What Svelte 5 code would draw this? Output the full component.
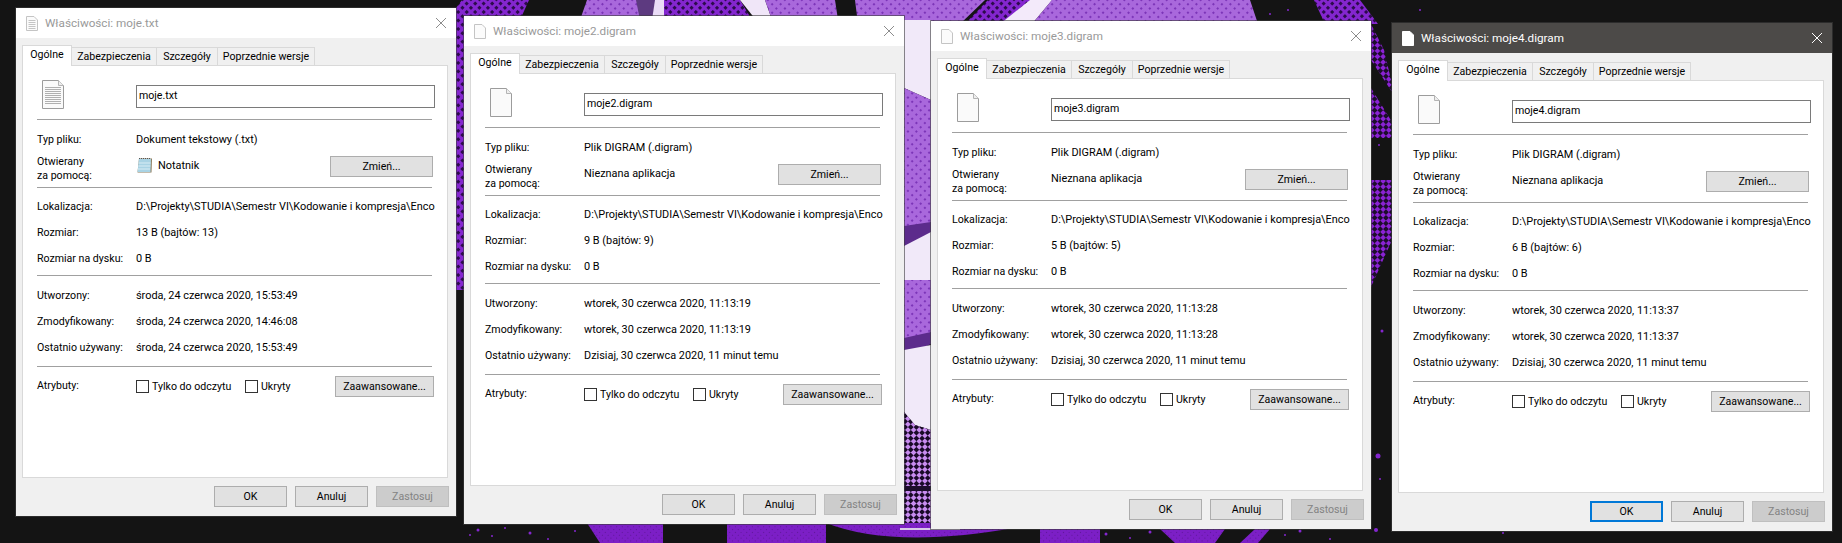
<script lang="ts">
    const path = "D:\\Projekty\\STUDIA\\Semestr VI\\Kodowanie i kompresja\\Enco";

    const windows = [
        {
            id: "w1", name: "moje.txt", kind: "Dokument tekstowy (.txt)", app: "Notatnik", text: true,
            size: "13 B (bajtów: 13)", created: "środa, 24 czerwca 2020, 15:53:49",
            modified: "środa, 24 czerwca 2020, 14:46:08", used: "środa, 24 czerwca 2020, 15:53:49"
        },
        {
            id: "w2", name: "moje2.digram", kind: "Plik DIGRAM (.digram)", app: "Nieznana aplikacja", text: false,
            size: "9 B (bajtów: 9)", created: "wtorek, 30 czerwca 2020, 11:13:19",
            modified: "wtorek, 30 czerwca 2020, 11:13:19", used: "Dzisiaj, 30 czerwca 2020, 11 minut temu"
        },
        {
            id: "w3", name: "moje3.digram", kind: "Plik DIGRAM (.digram)", app: "Nieznana aplikacja", text: false,
            size: "5 B (bajtów: 5)", created: "wtorek, 30 czerwca 2020, 11:13:28",
            modified: "wtorek, 30 czerwca 2020, 11:13:28", used: "Dzisiaj, 30 czerwca 2020, 11 minut temu"
        },
        {
            id: "w4", name: "moje4.digram", kind: "Plik DIGRAM (.digram)", app: "Nieznana aplikacja", text: false, active: true,
            size: "6 B (bajtów: 6)", created: "wtorek, 30 czerwca 2020, 11:13:37",
            modified: "wtorek, 30 czerwca 2020, 11:13:37", used: "Dzisiaj, 30 czerwca 2020, 11 minut temu"
        }
    ];

    const tabs = ["Zabezpieczenia", "Szczegóły", "Poprzednie wersje"];

    // loose purple specks on the dark part of the wallpaper
    const specks = [
        [478, 530, 1.5], [492, 536, 1], [505, 528, 1], [530, 533, 1.5], [548, 539, 1], [575, 531, 1],
        [1106, 534, 1.5], [1130, 538, 1], [1150, 532, 1.5], [1285, 535, 1], [1300, 531, 1.5], [1330, 539, 1],
        [1379, 145, 1], [1379, 238, 1.5], [1382, 331, 1.5], [1378, 456, 2.5], [1380, 479, 1], [1376, 530, 2],
        [1503, 533, 1], [1340, 8, 1], [1420, 10, 1], [470, 535, 1], [1288, 10, 1], [1270, 14, 1]
    ];
</script>

<main class="desktop">
    <svg class="wallpaper" viewBox="0 0 1842 543" width="1842" height="543" aria-hidden="true">
        <defs>
            <pattern id="deep" width="6" height="6" patternUnits="userSpaceOnUse" patternTransform="rotate(45)">
                <rect width="6" height="6" fill="#8426cf" />
                <rect x="1" y="1" width="3" height="3" fill="#2c0b4c" />
            </pattern>
            <pattern id="soft" width="6" height="6" patternUnits="userSpaceOnUse" patternTransform="rotate(45)">
                <rect width="6" height="6" fill="#a968dc" />
                <rect x="2" y="2" width="2" height="2" fill="#7c35b8" />
            </pattern>
            <pattern id="check" width="8" height="8" patternUnits="userSpaceOnUse" patternTransform="rotate(45)">
                <rect width="8" height="8" fill="#c88cf0" />
                <rect width="4" height="4" fill="#1a0a28" />
                <rect x="4" y="4" width="4" height="4" fill="#1a0a28" />
            </pattern>
            <pattern id="night" width="8" height="8" patternUnits="userSpaceOnUse" patternTransform="rotate(45)">
                <rect width="8" height="8" fill="#8a22d4" />
                <rect width="4" height="4" fill="#1d0d2c" />
                <rect x="4" y="4" width="4" height="4" fill="#1d0d2c" />
            </pattern>
            <pattern id="fine" width="4" height="4" patternUnits="userSpaceOnUse" patternTransform="rotate(45)">
                <rect width="4" height="4" fill="#7c1fc6" />
                <rect width="1" height="1" fill="#5f1799" />
            </pattern>
        </defs>
        <rect width="1842" height="543" fill="#141414" />

        <polygon points="462,0 529,0 520,20 470,290 456,290 456,8" fill="url(#deep)" />
        <polygon points="587,0 663,0 660,20 580,20" fill="url(#soft)" />
        <polygon points="636,0 663,0 660,20 640,20" fill="#5d3a80" />
        <polygon points="655,0 664,0 664,20 652,20" fill="#eadcf6" />
        <polygon points="664,0 740,0 752,20 664,20" fill="url(#deep)" />
        <polygon points="740,0 765,0 772,20 756,20" fill="#f0e6f8" />
        <polygon points="765,0 835,0 838,20 772,20" fill="url(#soft)" />
        <polygon points="855,0 985,0 960,24 858,24" fill="url(#soft)" />
        <polygon points="988,0 1052,0 1030,24 965,24" fill="url(#deep)" />
        <polygon points="1030,0 1052,0 1032,24 1000,24" fill="#f3eafa" />
        <polygon points="1052,0 1250,0 1258,24 1032,24" fill="url(#soft)" />
        <polygon points="1314,0 1360,0 1378,24 1325,24" fill="url(#deep)" />

        <polygon points="904,20 931,20 931,100 904,88" fill="#f1e9f9" />
        <polygon points="904,88 931,100 931,226 904,240" fill="url(#soft)" />
        <polygon points="904,240 931,226 931,280 904,280" fill="#f1e9f9" />
        <polygon points="904,226 931,222 931,232 904,246" fill="#5c2b8c" />
        <polygon points="904,280 931,280 931,334 904,346" fill="url(#soft)" />
        <polygon points="904,338 931,332 931,344 904,356" fill="#5c2b8c" />
        <polygon points="904,350 931,345 931,430 915,425 904,412" fill="#f1e9f9" />
        <polygon points="904,412 915,425 931,430 931,490 904,490" fill="url(#check)" />
        <rect x="904" y="490" width="27" height="33" fill="url(#check)" />
        <rect x="904" y="486" width="27" height="5" fill="#1d0d2c" />

        <polygon points="1371,24 1384,50 1392,84 1392,92 1371,60" fill="url(#night)" />
        <polygon points="1371,88 1392,122 1392,138 1371,138" fill="url(#night)" />
        <polygon points="1371,180 1392,180 1392,240 1371,287" fill="url(#night)" />

        <polygon points="587,523 663,523 663,543 600,543" fill="url(#fine)" />
        <polygon points="727,523 1100,523 1100,543 727,543" fill="url(#fine)" />
        <path d="M826 523 Q900 552 1040 523 L1040 543 L826 543 Z" fill="#141414" />
        <rect x="900" y="528" width="60" height="2" fill="#d8c8e8" />
        <polygon points="1160,529 1225,529 1215,543 1175,543" fill="url(#fine)" />
        <polygon points="1255,529 1270,529 1258,543 1240,543" fill="url(#fine)" />
        {#each specks as [cx, cy, r]}
            <circle {cx} {cy} {r} fill="#8426cf" />
        {/each}
    </svg>

    {#each windows as win}
        <section class="window {win.id}" class:active={win.active}>
            <header class="titlebar">
                <svg class="title-icon" viewBox="0 0 12 15" width="12" height="15" aria-hidden="true">
                    <path d="M.5.5h7.5l3.5 3.5v10.500h-11z" fill={win.active ? "#fff" : "#fbfbfb"} stroke={win.active ? "#fff" : "#c4c4c4"} />
                    {#if win.text}
                        <path d="M2.500 4.500h7M2.500 6.500h7M2.500 8.500h7M2.500 10.500h7M2.500 12.500h7" stroke="#c4c4c4" />
                    {/if}
                </svg>
                <span class="title-text">Właściwości: {win.name}</span>
                <svg class="close" viewBox="0 0 10 10" width="10" height="10" aria-hidden="true">
                    <path d="M0 0l10 10M10 0L0 10" stroke="currentColor" stroke-width="1" />
                </svg>
            </header>

            <nav class="tabs">
                <span class="tab current">Ogólne</span>
                {#each tabs as tab}
                    <span class="tab">{tab}</span>
                {/each}
            </nav>

            <div class="panel">
                <div class="name-row">
                    <svg class="file-icon" viewBox="0 0 22 29" width="22" height="29" aria-hidden="true">
                        <path d="M.5.5h16l5 5v23h-21z" fill="#fafafa" stroke="#9c9c9c" />
                        <path d="M16.500.5v5h5" fill="#eee" stroke="#b4b4b4" />
                        {#if win.text}
                            <path d="M3 7.500h16M3 9.500h16M3 11.500h16M3 13.500h16M3 15.500h16M3 17.500h16M3 19.500h16M3 21.500h16M3 23.500h16" stroke="#b0b0b0" />
                        {/if}
                    </svg>
                    <input class="name-input" type="text" readonly value={win.name} />
                </div>
                <hr />

                <div class="row first"><span>Typ pliku:</span><span>{win.kind}</span></div>
                <div class="open-row">
                    <span class="open-label">Otwierany<br />za pomocą:</span>
                    <span class="open-app">
                        {#if win.text}
                            <svg class="app-icon" viewBox="0 0 17 17" width="17" height="17" aria-hidden="true">
                                <path d="M3 1.500h13l-.5 14h-14z" fill="#8a7a5c" />
                                <path d="M3 2h12l-.5 13h-13z" fill="#a9d3e4" />
                                <path d="M3 1.500h12" stroke="#555" stroke-dasharray="1 1" />
                                <path d="M2.500 6h12M2.300 9h12M2 12h12" stroke="#d8edf5" />
                            </svg>
                        {/if}
                        {win.app}
                    </span>
                    <button class="btn change" type="button">Zmień...</button>
                </div>
                <hr />

                <div class="row first-tight"><span>Lokalizacja:</span><span class="path">{path}</span></div>
                <div class="row"><span>Rozmiar:</span><span>{win.size}</span></div>
                <div class="row"><span>Rozmiar na dysku:</span><span>0 B</span></div>
                <hr class="close-gap" />

                <div class="row first"><span>Utworzony:</span><span>{win.created}</span></div>
                <div class="row"><span>Zmodyfikowany:</span><span>{win.modified}</span></div>
                <div class="row"><span>Ostatnio używany:</span><span>{win.used}</span></div>
                <hr class="open-gap" />

                <div class="attr-row">
                    <span class="attr-label">Atrybuty:</span>
                    <label class="check read-only"><input type="checkbox" />Tylko do odczytu</label>
                    <label class="check"><input type="checkbox" />Ukryty</label>
                    <button class="btn advanced" type="button">Zaawansowane...</button>
                </div>
            </div>

            <footer class="actions">
                <button class="btn action" class:default={win.active} type="button">OK</button>
                <button class="btn action" type="button">Anuluj</button>
                <button class="btn action" type="button" disabled>Zastosuj</button>
            </footer>
        </section>
    {/each}
</main>

<style>
    :global(body) {
        background: #141414;
    }

    .desktop {
        position: relative;
        width: 1842px;
        height: 543px;
        overflow: hidden;
        font-family: Roboto, "Liberation Sans", sans-serif;
        font-size: 10.6px;
        color: #000;
    }

    .wallpaper {
        position: absolute;
        left: 0;
        top: 0;
    }

    /* Windows sit on a free desktop, so these four are placed by hand */
    .window {
        position: absolute;
        width: 440px;
        height: 508px;
        display: flex;
        flex-direction: column;
        background: #f0f0f0;
        box-shadow: 0 0 0 1px rgba(60, 60, 60, 0.6);
    }

    .w1 { left: 16px; top: 8px; }
    .w2 { left: 464px; top: 16px; }
    .w3 { left: 931px; top: 21px; }
    .w4 { left: 1392px; top: 23px; }

    .titlebar {
        height: 30px;
        flex-shrink: 0;
        display: flex;
        align-items: center;
        padding: 0 10px 0 10px;
        background: #fff;
        color: #999;
        font-size: 11.7px;
    }

    .title-icon {
        margin-right: 7px;
    }

    .title-text {
        flex: 1;
    }

    .close {
        margin-top: -1px;
        color: #8c8c8c;
    }

    .active .titlebar {
        background: #4c4a48;
        color: #fff;
    }

    .active .close {
        color: #fff;
    }

    .tabs {
        height: 27px;
        flex-shrink: 0;
        display: flex;
        align-items: flex-end;
        padding-left: 6px;
    }

    .tab {
        box-sizing: border-box;
        height: 18px;
        line-height: 18px;
        text-align: center;
        background: #f0f0f0;
        border: 1px solid #d9d9d9;
        border-bottom: none;
        margin-left: -1px;
        white-space: nowrap;
    }

    .tab:nth-child(2) { width: 86px; }
    .tab:nth-child(3) { width: 62px; }
    .tab:nth-child(4) { width: 98px; }

    .tab.current {
        width: 50px;
        height: 21px;
        line-height: 17px;
        margin-left: 0;
        margin-bottom: -1px;
        background: #fff;
        position: relative;
        z-index: 1;
    }

    .panel {
        width: 426px;
        height: 413px;
        flex-shrink: 0;
        box-sizing: border-box;
        margin-left: 6px;
        padding: 19px 0 0 14px;
        background: #fff;
        border: 1px solid #d9d9d9;
    }

    .name-row {
        height: 23px;
        display: flex;
        align-items: center;
        margin-bottom: 11px;
    }

    .file-icon {
        margin-left: 5px;
        margin-top: -4px;
        margin-right: 72px;
    }

    .name-input {
        width: 299px;
        height: 23px;
        box-sizing: border-box;
        margin: 0;
        padding: 0 2px 2px;
        border: 1px solid #7a7a7a;
        border-radius: 0;
        outline: none;
        font: inherit;
        color: inherit;
    }

    hr {
        width: 395px;
        height: 1px;
        margin: 0;
        border: none;
        background: #a0a0a0;
    }

    hr.close-gap {
        margin-top: 4px;
    }

    hr.open-gap {
        margin-top: 6px;
    }

    .row {
        display: grid;
        grid-template-columns: 99px 299px;
        height: 26px;
        align-items: center;
        white-space: nowrap;
    }

    .row span:last-child,
    .open-app {
        font-size: 10.9px;
    }

    .row.first {
        margin-top: 6px;
    }

    .row.first-tight {
        margin-top: 5px;
    }

    .row .path {
        font-size: 10.85px;
        overflow: hidden;
    }

    .open-row {
        display: grid;
        grid-template-columns: 99px 194px 103px;
        height: 35px;
        align-items: start;
    }

    .open-label {
        line-height: 14px;
        padding-top: 3px;
    }

    .open-app {
        display: flex;
        align-items: center;
        height: 20px;
        padding-top: 3px;
    }

    .app-icon {
        margin-right: 5px;
    }

    .btn {
        box-sizing: border-box;
        height: 21px;
        margin: 0;
        padding: 0;
        background: #e1e1e1;
        border: 1px solid #adadad;
        border-radius: 0;
        font: inherit;
        color: inherit;
    }

    .btn:disabled {
        background: #ccc;
        border-color: #bfbfbf;
        color: #838383;
    }

    .change {
        width: 103px;
        margin-top: 4px;
    }

    .attr-row {
        display: flex;
        align-items: center;
        height: 26px;
        margin-top: 6px;
        white-space: nowrap;
    }

    .attr-label {
        width: 99px;
        margin-top: -1px;
    }

    .check {
        display: flex;
        align-items: center;
        gap: 3px;
    }

    .check.read-only {
        width: 109px;
    }

    .check input {
        appearance: none;
        width: 13px;
        height: 13px;
        margin: 0;
        background: #fff;
        border: 1px solid #333;
    }

    .advanced {
        width: 99px;
        margin-left: auto;
        margin-right: 13px;
    }

    .actions {
        display: flex;
        justify-content: flex-end;
        gap: 8px;
        padding: 8px 7px 0 0;
    }

    .action {
        width: 73px;
    }

    .action.default {
        border: 2px solid #0078d7;
    }
</style>
